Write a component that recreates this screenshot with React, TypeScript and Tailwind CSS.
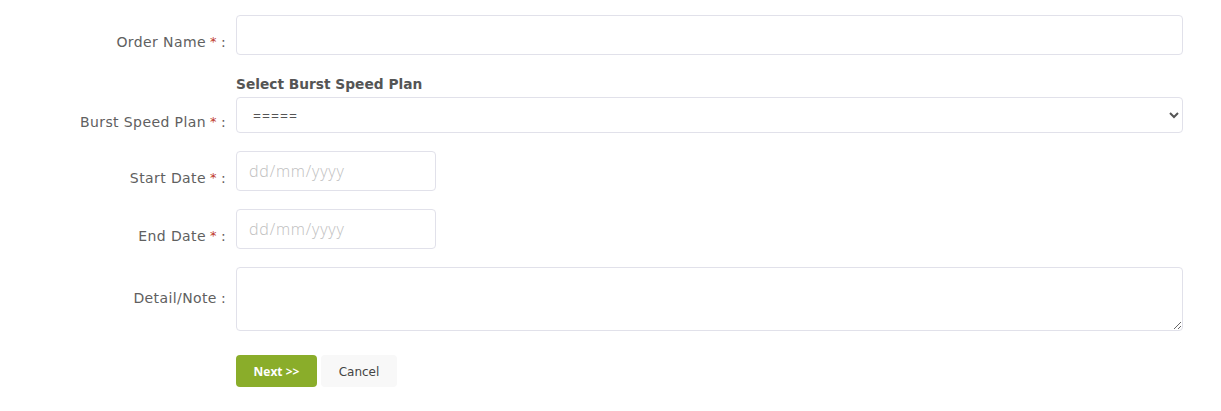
import React from "react";

const dv = '"DejaVu Sans", "Liberation Sans", sans-serif';
const os = '"Open Sans", "Liberation Sans", sans-serif';

function Label({ text, req, pt }: { text: string; req?: boolean; pt: string }) {
  return (
    <div
      className={`w-[226px] shrink-0 text-right text-[14px] leading-[20px] tracking-[0.4px] text-[#606060] ${pt}`}
      style={{ fontFamily: dv }}
    >
      {text}
      {req && <span className="text-[#c0392b] text-[13px] ml-[4px] relative top-[-1px]">*</span>}
      <span className="ml-[4px]">:</span>
    </div>
  );
}

const dateCls =
  "w-[200px] h-[40px] border border-[#e1e1ea] rounded-[4px] px-[12px] text-[16px] font-light tracking-[0.8px] placeholder:text-[#c0c0c0] outline-none";

export default function App() {
  return (
    <div className="w-[1221px] h-[411px] bg-white pr-[38px] pt-[15px]" style={{ fontFamily: os }}>
      <div className="flex gap-[10px]">
        <Label text="Order Name" req pt="pt-[17px]" />
        <input className="flex-1 h-[40px] border border-[#e1e1ea] rounded-[4px] px-3 outline-none" />
      </div>
      <div className="flex gap-[10px] mt-[19px]">
        <Label text="Burst Speed Plan" req pt="pt-[38px]" />
        <div className="flex-1">
          <div
            className="text-[13.75px] leading-[20px] font-bold text-[#555555] mb-[3px]"
            style={{ fontFamily: dv }}
          >
            Select Burst Speed Plan
          </div>
          <select className="w-full h-[36px] border border-[#e1e1ea] rounded-[4px] pl-[12px] pr-[6px] text-[14px] tracking-[1px] text-[#555] bg-white outline-none">
            <option>=====</option>
          </select>
        </div>
      </div>
      <div className="flex gap-[10px] mt-[18px]">
        <Label text="Start Date" req pt="pt-[17px]" />
        <input placeholder="dd/mm/yyyy" className={dateCls} />
      </div>
      <div className="flex gap-[10px] mt-[18px]">
        <Label text="End Date" req pt="pt-[17px]" />
        <input placeholder="dd/mm/yyyy" className={dateCls} />
      </div>
      <div className="flex gap-[10px] mt-[18px]">
        <Label text="Detail/Note" pt="pt-[21px]" />
        <textarea className="flex-1 h-[64px] border border-[#e1e1ea] rounded-[4px] px-3 py-2 outline-none" />
      </div>
      <div className="flex gap-[10px] mt-[24px]">
        <div className="w-[226px] shrink-0" />
        <div className="flex gap-[4px]">
          <button className="w-[81px] h-[32px] pt-[1px] rounded-[4px] bg-[#8aad2a] text-white text-[12px] font-bold">
            Next &gt;&gt;
          </button>
          <button
            className="w-[76px] h-[32px] pt-[1px] rounded-[4px] bg-[#f8f8f8] text-[#444] text-[12px]"
            style={{ fontFamily: dv }}
          >
            Cancel
          </button>
        </div>
      </div>
    </div>
  );
}
